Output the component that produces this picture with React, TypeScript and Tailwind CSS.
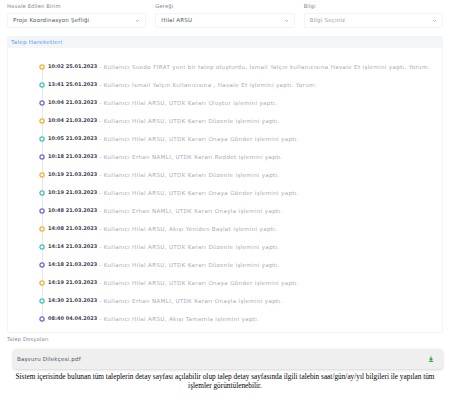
import React from 'react';

interface LogItem {
  time: string;
  text: string;
}

const logs: LogItem[] = [
  { time: '10:02 25.01.2023', text: 'Kullanıcı Suedo FIRAT yeni bir talep oluşturdu, İsmail Yalçın kullanıcısına Havale Et işlemini yaptı. Yorum:' },
  { time: '13:41 25.01.2023', text: 'Kullanıcı İsmail Yalçın Kullanıcısına , Havale Et işlemini yaptı. Yorum:' },
  { time: '10:04 21.03.2023', text: 'Kullanıcı Hilal ARSU, UTDK Kararı Oluştur işlemini yaptı.' },
  { time: '10:04 21.03.2023', text: 'Kullanıcı Hilal ARSU, UTDK Kararı Düzenle işlemini yaptı.' },
  { time: '10:05 21.03.2023', text: 'Kullanıcı Hilal ARSU, UTDK Kararı Onaya Gönder işlemini yaptı.' },
  { time: '10:18 21.03.2023', text: 'Kullanıcı Erhan NAMLI, UTDK Kararı Reddet işlemini yaptı.' },
  { time: '10:19 21.03.2023', text: 'Kullanıcı Hilal ARSU, UTDK Kararı Düzenle işlemini yaptı.' },
  { time: '10:19 21.03.2023', text: 'Kullanıcı Hilal ARSU, UTDK Kararı Onaya Gönder işlemini yaptı.' },
  { time: '10:48 21.03.2023', text: 'Kullanıcı Erhan NAMLI, UTDK Kararı Onayla işlemini yaptı.' },
  { time: '14:08 21.03.2023', text: 'Kullanıcı Hilal ARSU, Akışı Yeniden Başlat işlemini yaptı.' },
  { time: '14:14 21.03.2023', text: 'Kullanıcı Hilal ARSU, UTDK Kararı Düzenle işlemini yaptı.' },
  { time: '14:18 21.03.2023', text: 'Kullanıcı Hilal ARSU, UTDK Kararı Düzenle işlemini yaptı.' },
  { time: '14:19 21.03.2023', text: 'Kullanıcı Hilal ARSU, UTDK Kararı Onaya Gönder işlemini yaptı.' },
  { time: '14:30 21.03.2023', text: 'Kullanıcı Erhan NAMLI, UTDK Kararı Onayla işlemini yaptı.' },
  { time: '08:40 04.04.2023', text: 'Kullanıcı Hilal ARSU, Akışı Tamamla işlemini yaptı.' },
];

const dotColors = ['#f5ac3a', '#3fc4bd', '#7b5fd8'];

const Chevron = () => (
  <svg width="5" height="5" viewBox="0 0 10 10" className="text-gray-400">
    <path d="M2 4 L5 7 L8 4" fill="none" stroke="currentColor" strokeWidth="1.4" />
  </svg>
);

const SelectField: React.FC<{ label: string; value: string; placeholder?: boolean }> = ({ label, value, placeholder }) => (
  <div>
    <div className="text-[5.2px] tracking-[0.15px] leading-[7px] text-[#7e8299] mb-[3px]">{label}</div>
    <div className="h-[15px] border border-gray-100 rounded-[2px] px-[5px] flex items-center justify-between bg-white">
      <span className={`text-[5.5px] tracking-[0.2px] ${placeholder ? 'text-gray-400' : 'text-gray-600'}`}>{value}</span>
      <Chevron />
    </div>
  </div>
);

export default function App() {
  return (
    <div className="w-[450px] h-[400px] bg-white overflow-hidden" style={{ fontFamily: '"DejaVu Sans", Verdana, sans-serif' }}>
      <div className="grid grid-cols-3 gap-x-[9px] px-[7px] pt-[3px]">
        <SelectField label="Havale Edilen Birim" value="Proje Koordinasyon Şefliği" />
        <SelectField label="Gereği" value="Hilal ARSU" />
        <SelectField label="Bilgi" value="Bilgi Seçiniz" placeholder />
      </div>

      <div className="mx-[7px] mt-[8px] border border-gray-100 rounded-[2px]">
        <div className="h-[11px] bg-[#f3f6f9] px-[3px] flex items-center text-[5.5px] tracking-[0.3px] text-[#5b9be9]">Talep Hareketleri</div>
        <div className="relative pt-[10px] pb-[4px] pl-[31px]">
          <div className="absolute left-[33.5px] top-[19px] bottom-[13px] w-px bg-gray-200" />
          {logs.map((log, i) => (
            <div key={i} className="relative h-[18px] flex items-center whitespace-nowrap">
              <svg width="6" height="6" viewBox="0 0 6 6" className="relative z-10 shrink-0">
                <circle cx="3" cy="3" r="2.1" fill="white" stroke={dotColors[i % 3]} strokeWidth="1.3" />
              </svg>
              <span className="ml-[3px] text-[5px] font-bold text-[#3f4254]">{log.time}</span>
              <span className="ml-[2px] text-[5.5px] tracking-[0.37px] text-[#a7aab8]">- {log.text}</span>
            </div>
          ))}
        </div>
      </div>

      <div className="px-[7px] mt-[3px] text-[5.2px] tracking-[0.15px] leading-[7px] text-[#7e8299]">Talep Dosyaları</div>

      <div className="ml-[13px] mr-[7px] mt-[6px] h-[20px] bg-[#efefef] rounded-[4px] shadow-[0_1px_3px_rgba(0,0,0,0.18)] flex items-center justify-between pl-[4px] pr-[9px]">
        <span className="text-[5.5px] tracking-[0.2px] text-gray-600">Başvuru Dilekçesi.pdf</span>
        <svg width="6" height="6" viewBox="0 0 10 10">
          <path d="M5 1 V6.5 M2.5 4.5 L5 7 L7.5 4.5" fill="none" stroke="#2f9e44" strokeWidth="1.7" />
          <path d="M1.5 9 H8.5" stroke="#2f9e44" strokeWidth="1.7" />
        </svg>
      </div>

      <p className="px-[8px] mt-[3px] text-center text-[7.3px] leading-[9px] font-normal text-black" style={{ fontFamily: '"Liberation Serif", "Times New Roman", serif' }}>
        Sistem içerisinde bulunan tüm taleplerin detay sayfası açılabilir olup talep detay sayfasında ilgili talebin saat/gün/ay/yıl bilgileri ile yapılan tüm işlemler görüntülenebilir.
      </p>
    </div>
  );
}
